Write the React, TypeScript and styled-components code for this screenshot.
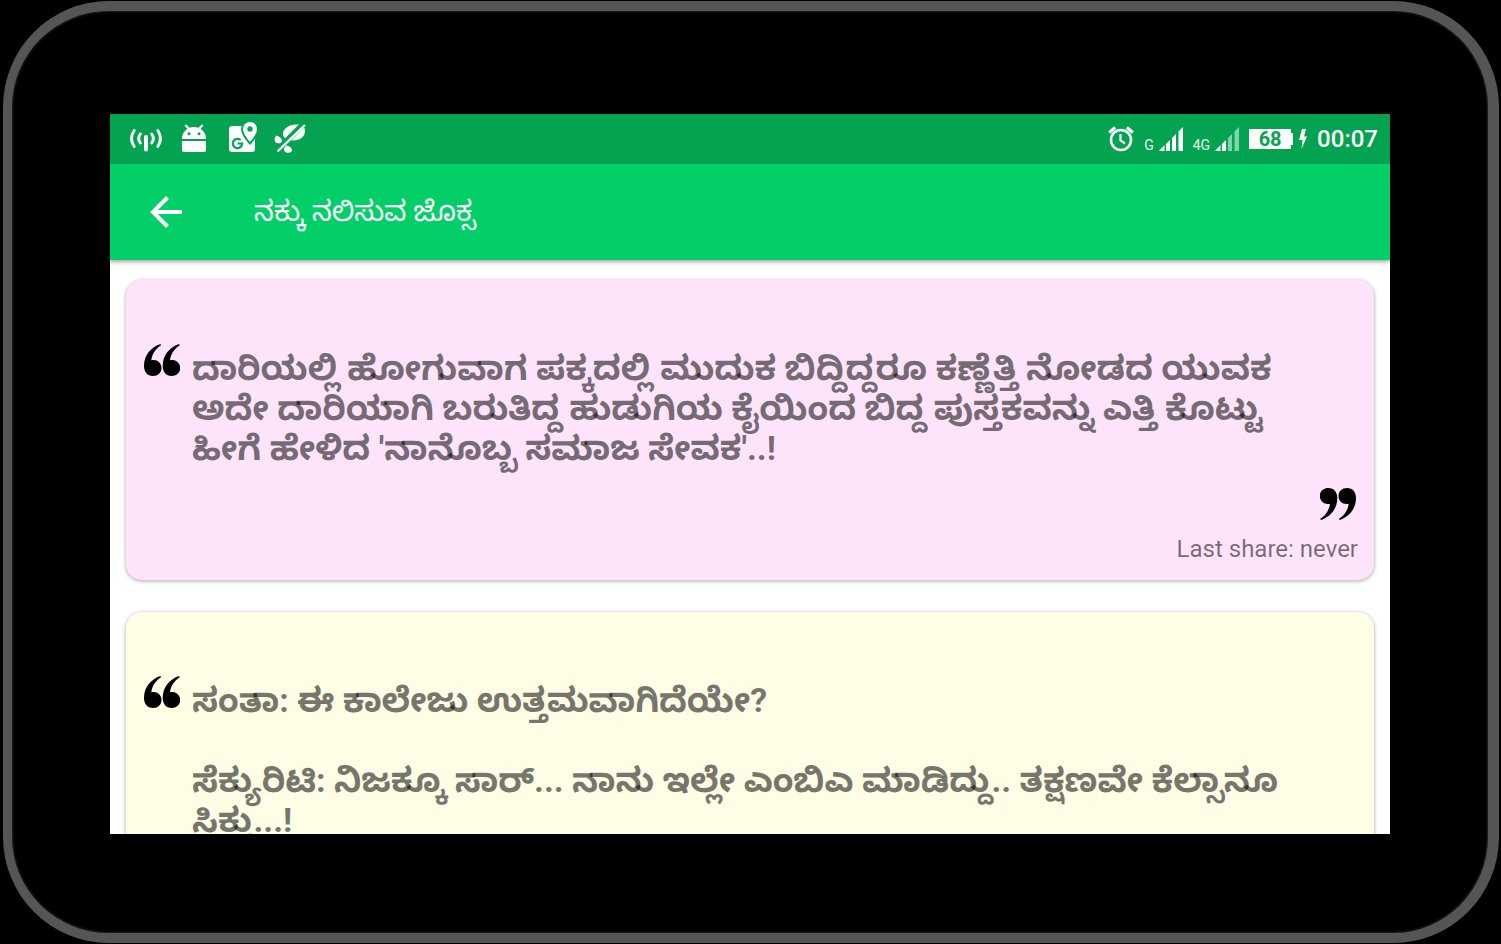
import React from "react";
import styled, { createGlobalStyle } from "styled-components";

const GlobalStyle = createGlobalStyle`
  *, *::before, *::after { box-sizing: border-box; }
  body {
    margin: 0;
    background: #000;
    font-family: Roboto, "Noto Sans Kannada", "Noto Sans", sans-serif;
  }
`;

const Stage = styled.div`
  display: flex;
  height: 100vh;
  padding: 1px 2px 1px 3px;
`;

const Device = styled.div`
  flex: 1;
  min-width: 0;
  display: flex;
  padding: 103px 98px 99px;
  border: 10px solid #555;
  border-left-width: 9px;
  border-right-width: 11px;
  border-radius: 106px;
  background: #000;
  box-shadow: inset 0 0 2px 1px #222;
`;

const Screen = styled.div`
  flex: 1;
  min-width: 0;
  display: flex;
  flex-direction: column;
  overflow: hidden;
  background: #fff;
`;

const StatusBar = styled.div`
  flex: none;
  display: flex;
  align-items: center;
  justify-content: space-between;
  height: 50px;
  padding: 0 12px 0 20px;
  background: #03a352;
  color: #fff;
`;

const StatusGroup = styled.div<{ $gap: number }>`
  display: flex;
  align-items: center;
  gap: ${(p) => p.$gap}px;
  svg { display: block; overflow: visible; }
`;

const Network = styled.div`
  display: flex;
  align-items: flex-end;
  gap: 5px;
`;

const NetworkType = styled.span`
  font-size: 14px;
  line-height: 12px;
  color: #e6f6ee;
`;

const Battery = styled.div`
  display: flex;
  align-items: center;
`;

const BatteryBody = styled.span`
  width: 42px;
  background: #fff;
  color: #03a352;
  font-size: 20px;
  font-weight: 700;
  line-height: 20px;
  text-align: center;
`;

const BatteryCap = styled.span`
  width: 2px;
  height: 12px;
  background: #fff;
`;

const Power = styled.div`
  display: flex;
  align-items: center;
  gap: 6px;
`;

const Clock = styled.time`
  font-size: 24px;
  font-weight: 500;
  line-height: 28px;
`;

const AppBar = styled.header`
  position: relative;
  flex: none;
  display: flex;
  align-items: center;
  gap: 72px;
  height: 96px;
  padding: 0 40px;
  background: #03cf69;
  color: #fff;
  box-shadow: 0 2px 4px rgba(0, 0, 0, 0.35);
`;

const BackButton = styled.button`
  display: flex;
  padding: 0;
  border: 0;
  background: none;
  color: inherit;
`;

const Title = styled.h1`
  margin: 0;
  font-size: 28px;
  font-weight: 400;
  line-height: 40px;
  white-space: nowrap;
`;

const Feed = styled.main`
  flex: 1;
  min-height: 0;
  overflow: hidden;
  display: flex;
  flex-direction: column;
  gap: 32px;
  padding: 20px 16px 0;
`;

const Card = styled.article<{ $tint: string }>`
  flex: none;
  display: grid;
  grid-template-columns: 36px 1fr;
  column-gap: 12px;
  padding: 64px 16px 16px 18px;
  border-radius: 16px;
  background: ${(p) => p.$tint};
  box-shadow: 0 1px 4px rgba(0, 0, 0, 0.35);
`;

const Joke = styled.p`
  margin: 0;
  padding-top: 4px;
  color: rgba(0, 0, 0, 0.54);
  font-size: 34px;
  font-weight: 700;
  line-height: 40px;
  white-space: pre;
`;

const CardFooter = styled.footer`
  grid-column: 1 / -1;
  display: flex;
  flex-direction: column;
  align-items: flex-end;
  gap: 14px;
  margin-top: 20px;
  color: rgba(0, 0, 0, 0.54);
  font-size: 24px;
  line-height: 30px;
`;

const QuoteMark = styled.svg<{ $closing?: boolean }>`
  display: block;
  margin-right: ${(p) => (p.$closing ? 2 : 0)}px;
  transform: ${(p) => (p.$closing ? "rotate(180deg)" : "none")};
`;

const MARK = "M16.5 0C7 3 0 11 0 22C0 28 3.500 32 8.800 32C14 32 17.500 28.600 17.500 24C17.500 19.500 14 16 9.500 16C8.700 16 8 16.100 7.300 16.300C8 10.500 11 5 17 1.200Z";

function Quote({ closing }: { closing?: boolean }) {
  return (
    <QuoteMark $closing={closing} width="36" height="32" viewBox="0 0 36 32" aria-hidden="true">
      <path d={MARK} />
      <path d={MARK} transform="translate(18.700 0)" />
    </QuoteMark>
  );
}

function Hotspot() {
  return (
    <svg width="32" height="28" viewBox="0 0 32 28" fill="none" stroke="#fff" strokeLinecap="round" aria-hidden="true">
      <path d="M4.200 5.500Q-1.200 13.500 4.200 21.500M27.800 5.500Q33.200 13.500 27.800 21.500" strokeWidth="2.900" />
      <path d="M10.300 9Q7 13.500 10.300 18M21.700 9Q25 13.500 21.700 18" strokeWidth="2.900" />
      <path d="M16 12V24.500" strokeWidth="4" />
    </svg>
  );
}

function Android() {
  return (
    <svg width="24" height="28" viewBox="0 0 24 28" fill="#fff" aria-hidden="true">
      <path d="M0 14C0 9 2.500 5.800 5.500 4L2.600 .8L4.200 -.8L7.500 2.800Q12 1.300 16.500 2.800L19.800 -.8L21.400 .8L18.500 4C21.500 5.800 24 9 24 14Z" />
      <circle cx="7" cy="8.800" r="1.500" fill="#03a352" />
      <circle cx="17" cy="8.800" r="1.500" fill="#03a352" />
      <path d="M0 16H24V25Q24 27 22 27H2Q0 27 0 25Z" />
    </svg>
  );
}

function MapsPin() {
  return (
    <svg width="28" height="32" viewBox="-3 2 28 32" aria-hidden="true">
      <path d="M3 5H26V28Q26 31 23 31H3Q0 31 0 28V8Q0 5 3 5Z" fill="#fff" />
      <path d="M21 0C16.200 0 13 3.500 13 8C13 13.500 21 22.500 21 22.500S29 13.500 29 8C29 3.500 25.800 0 21 0Z" fill="#fff" stroke="#03a352" strokeWidth="2" />
      <circle cx="21" cy="8" r="2.700" fill="#03a352" />
      <path d="M11.600 19A4.700 4.700 0 1 0 13.200 22.500H8.500" fill="none" stroke="#03a352" strokeWidth="2.200" />
    </svg>
  );
}

function BlobOff() {
  return (
    <svg width="32" height="30" viewBox="0 0 32 30" aria-hidden="true">
      <path d="M9 9C10 3 17 .5 23 .5C28 .5 31 3 31 7C31 13 25 17 18 16.500C13 16 8 13 9 9Z" fill="#fff" />
      <path d="M2 11.500Q6 12 8 16Q9 19 5 19.500Q-2 19 2 11.500Z" fill="#fff" />
      <path d="M12 21.500Q18 22 18 27Q17 29.500 12 28.500Q8 26 12 21.500Z" fill="#fff" />
      <path d="M2 27.500L30.500 -1" stroke="#03a352" strokeWidth="6" />
      <path d="M3.500 27.500L31 1" stroke="#fff" strokeWidth="2.400" />
    </svg>
  );
}

function Alarm() {
  return (
    <svg width="26" height="26" viewBox="0 0 26 26" fill="none" stroke="#fff" aria-hidden="true">
      <circle cx="13" cy="14" r="10" strokeWidth="2.600" />
      <path d="M1.200 6.500L7.200 1.500M24.800 6.500L18.800 1.500" strokeWidth="3" />
      <path d="M12.500 8V14.500L17 17.500" strokeWidth="2.200" />
    </svg>
  );
}

const BARS = [
  "M0 24L5.500 18V24Z",
  "M7 24V17L11 13V24Z",
  "M13 24V11L17 7V24Z",
  "M19.500 24V4.500L24 0V24Z",
];

function Signal({ level }: { level: number }) {
  return (
    <svg width="24" height="24" viewBox="0 0 24 24" fill="#fff" aria-hidden="true">
      {BARS.map((bar, i) => (
        <path key={bar} d={bar} opacity={i < level ? 1 : 0.5} />
      ))}
    </svg>
  );
}

function Bolt() {
  return (
    <svg width="8" height="20" viewBox="0 0 8 20" fill="#fff" aria-hidden="true">
      <path d="M3 0H7L5 7.500H8L2.500 20L3.500 11H0Z" />
    </svg>
  );
}

function BackArrow() {
  return (
    <svg width="32" height="32" viewBox="0 0 32 32" fill="none" stroke="currentColor" strokeWidth="4" aria-hidden="true">
      <path d="M32 16H3M17.500 1.500L3 16L17.500 30.500" />
    </svg>
  );
}

const jokes = [
  {
    tint: "#fde4fb",
    lastShare: "never",
    text: `ದಾರಿಯಲ್ಲಿ ಹೋಗುವಾಗ ಪಕ್ಕದಲ್ಲಿ ಮುದುಕ ಬಿದ್ದಿದ್ದರೂ ಕಣ್ಣೆತ್ತಿ ನೋಡದ ಯುವಕ
ಅದೇ ದಾರಿಯಾಗಿ ಬರುತಿದ್ದ ಹುಡುಗಿಯ ಕೈಯಿಂದ ಬಿದ್ದ ಪುಸ್ತಕವನ್ನು ಎತ್ತಿ ಕೊಟ್ಟು
ಹೀಗೆ ಹೇಳಿದ 'ನಾನೊಬ್ಬ ಸಮಾಜ ಸೇವಕ'..!`,
  },
  {
    tint: "#fefde6",
    text: `ಸಂತಾ: ಈ ಕಾಲೇಜು ಉತ್ತಮವಾಗಿದೆಯೇ?

ಸೆಕ್ಯುರಿಟಿ: ನಿಜಕ್ಕೂ ಸಾರ್... ನಾನು ಇಲ್ಲೇ ಎಂಬಿಎ ಮಾಡಿದ್ದು.. ತಕ್ಷಣವೇ ಕೆಲ್ಸಾನೂ
ಸಿಕ್ತು...!`,
  },
];

export default function App() {
  return (
    <Stage>
      <GlobalStyle />
      <Device>
        <Screen>
          <StatusBar>
            <StatusGroup $gap={20}>
              <Hotspot />
              <Android />
              <MapsPin />
              <BlobOff />
            </StatusGroup>
            <StatusGroup $gap={10}>
              <Alarm />
              <Network>
                <NetworkType>G</NetworkType>
                <Signal level={4} />
              </Network>
              <Network>
                <NetworkType>4G</NetworkType>
                <Signal level={2} />
              </Network>
              <Power>
                <Battery>
                  <BatteryBody>68</BatteryBody>
                  <BatteryCap />
                </Battery>
                <Bolt />
              </Power>
              <Clock>00:07</Clock>
            </StatusGroup>
          </StatusBar>
          <AppBar>
            <BackButton type="button" aria-label="Back">
              <BackArrow />
            </BackButton>
            <Title lang="kn">ನಕ್ಕು ನಲಿಸುವ ಜೊಕ್ಸ</Title>
          </AppBar>
          <Feed>
            {jokes.map((joke) => (
              <Card key={joke.tint} $tint={joke.tint}>
                <Quote />
                <Joke lang="kn">{joke.text}</Joke>
                {joke.lastShare && (
                  <CardFooter>
                    <Quote closing />
                    <span>Last share: {joke.lastShare}</span>
                  </CardFooter>
                )}
              </Card>
            ))}
          </Feed>
        </Screen>
      </Device>
    </Stage>
  );
}
